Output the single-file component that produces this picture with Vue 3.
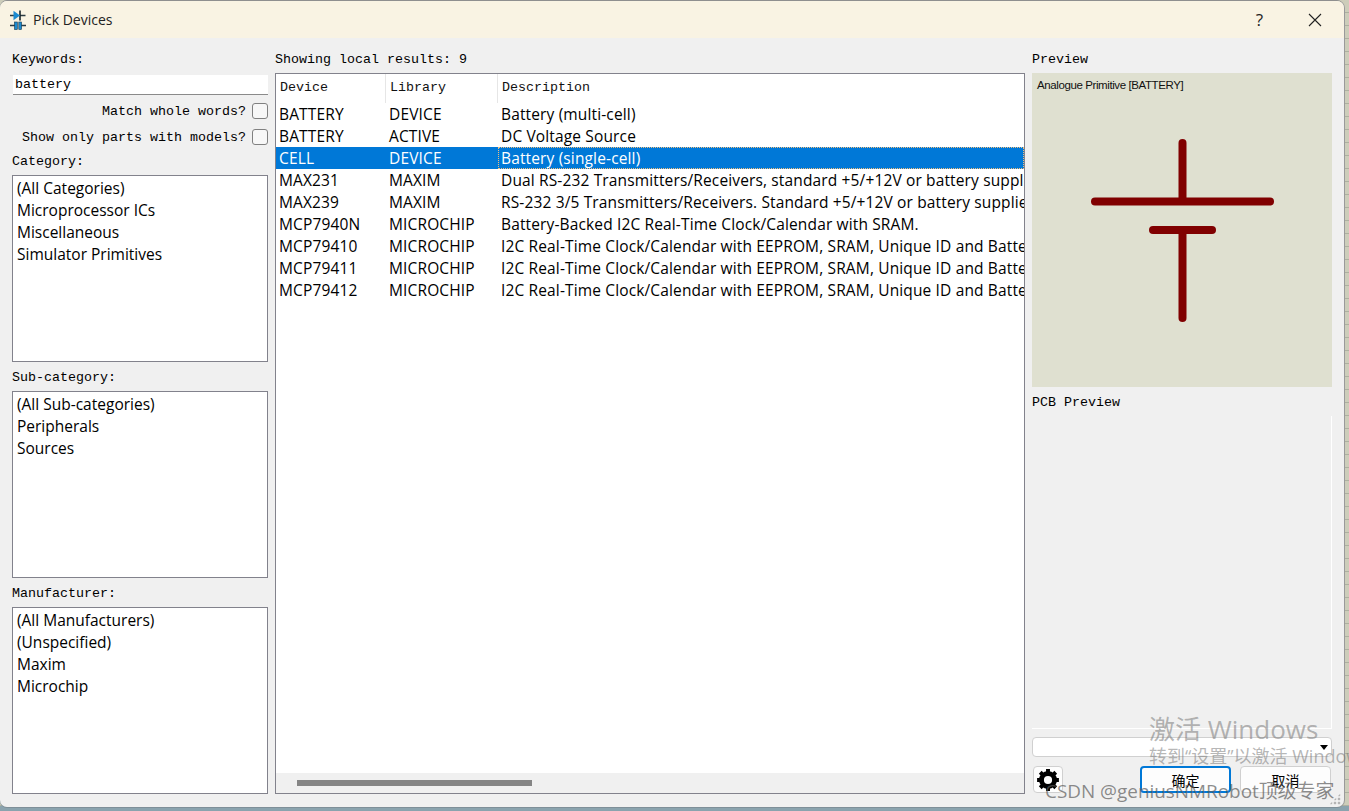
<script setup>
const categories = ['(All Categories)', 'Microprocessor ICs', 'Miscellaneous', 'Simulator Primitives']
const subCategories = ['(All Sub-categories)', 'Peripherals', 'Sources']
const manufacturers = ['(All Manufacturers)', '(Unspecified)', 'Maxim', 'Microchip']
const rows = [
  ['BATTERY', 'DEVICE', 'Battery (multi-cell)'],
  ['BATTERY', 'ACTIVE', 'DC Voltage Source'],
  ['CELL', 'DEVICE', 'Battery (single-cell)'],
  ['MAX231', 'MAXIM', 'Dual RS-232 Transmitters/Receivers, standard +5/+12V or battery supplies.'],
  ['MAX239', 'MAXIM', 'RS-232 3/5 Transmitters/Receivers. Standard +5/+12V or battery supplies.'],
  ['MCP7940N', 'MICROCHIP', 'Battery-Backed I2C Real-Time Clock/Calendar with SRAM.'],
  ['MCP79410', 'MICROCHIP', 'I2C Real-Time Clock/Calendar with EEPROM, SRAM, Unique ID and Battery Switchover'],
  ['MCP79411', 'MICROCHIP', 'I2C Real-Time Clock/Calendar with EEPROM, SRAM, Unique ID and Battery Switchover'],
  ['MCP79412', 'MICROCHIP', 'I2C Real-Time Clock/Calendar with EEPROM, SRAM, Unique ID and Battery Switchover'],
]
</script>

<template>
  <div class="desktop">
    <div class="window">
      <header class="titlebar">
        <svg class="app-icon" width="18" height="20" viewBox="0 0 18 20">
          <path d="M1 5.500h4.500M11 5.500h5.500" stroke="#2b3a42" stroke-width="1.300" fill="none" />
          <path d="M11 .5v10" stroke="#16222a" stroke-width="1.600" fill="none" />
          <path d="M4.500 .8 11 5.500 4.500 10.200z" fill="#1b8ad0" />
          <path d="M1 15.500h5M12 15.500h5" stroke="#2b3a42" stroke-width="1.300" fill="none" />
          <rect x="5.500" y="12" width="2.800" height="7.500" fill="#1b8ad0" stroke="#16384c" stroke-width=".6" />
          <rect x="9.800" y="12" width="2.800" height="7.500" fill="#1b8ad0" stroke="#16384c" stroke-width=".6" />
        </svg>
        <span class="title">Pick Devices</span>
        <span class="help">?</span>
        <svg class="close" width="14" height="14" viewBox="0 0 14 14">
          <path d="M1 1 13 13M13 1 1 13" stroke="#222" stroke-width="1.100" fill="none" />
        </svg>
      </header>

      <main class="content">
        <section class="left">
          <label class="mono kw-label">Keywords:</label>
          <div class="keyword mono">battery</div>
          <div class="check mono check-a">Match whole words?<i class="box"></i></div>
          <div class="check mono check-b">Show only parts with models?<i class="box"></i></div>
          <label class="mono cat-label">Category:</label>
          <ul class="list"><li v-for="c in categories" :key="c">{{ c }}</li></ul>
          <label class="mono sec-label">Sub-category:</label>
          <ul class="list"><li v-for="c in subCategories" :key="c">{{ c }}</li></ul>
          <label class="mono sec-label">Manufacturer:</label>
          <ul class="list"><li v-for="c in manufacturers" :key="c">{{ c }}</li></ul>
        </section>

        <section class="middle">
          <div class="mono head-label">Showing local results: 9</div>
          <div class="table">
            <div class="thead mono">
              <span class="c1">Device</span>
              <span class="c2">Library</span>
              <span class="c3">Description</span>
            </div>
            <div class="tbody">
              <div v-for="(r, i) in rows" :key="i" class="row" :class="{ selected: i === 2 }">
                <span class="c1">{{ r[0] }}</span>
                <span class="c2">{{ r[1] }}</span>
                <span class="c3">{{ r[2] }}</span>
              </div>
            </div>
            <div class="hscroll"><div class="thumb"></div></div>
          </div>
        </section>

        <section class="right">
          <div class="mono head-label">Preview</div>
          <div class="preview">
            <span class="preview-name">Analogue Primitive [BATTERY]</span>
            <svg class="symbol" width="300" height="314" viewBox="0 0 300 314">
              <g stroke="#800000" stroke-width="8" stroke-linecap="round" fill="none">
                <path d="M150.500 70V128" />
                <path d="M63 128.500H238" />
                <path d="M121 157H180" />
                <path d="M150.500 157V245" />
              </g>
            </svg>
          </div>
          <div class="mono pcb-label">PCB Preview</div>
          <div class="pcb"></div>
          <div class="combo"><i class="arrow"></i></div>
          <div class="actions">
            <button class="gear" aria-label="settings">
              <svg width="24" height="24" viewBox="0 0 22 22">
                <circle cx="11" cy="11" r="6" fill="none" stroke="#000" stroke-width="4.500" />
                <g stroke="#000" stroke-width="3.600">
                  <path d="M11 1v4M11 17v4M1 11h4M17 11h4M3.900 3.900l2.800 2.800M15.300 15.300l2.800 2.800M18.100 3.900l-2.800 2.800M6.700 15.300l-2.800 2.800" />
                </g>
              </svg>
            </button>
            <span class="spacer"></span>
            <button class="btn primary">确定</button>
            <button class="btn">取消</button>
          </div>
        </section>
      </main>
      <i class="grip"></i>
    </div>

    <div class="wm wm-a">激活 Windows</div>
    <div class="wm wm-b">转到“设置”以激活 Windows。</div>
    <div class="wm wm-c">CSDN @geniusNMRobot顶级专家</div>
  </div>
</template>

<style>
html, body { margin: 0; overflow: hidden; }
</style>

<style scoped>
.desktop {
  position: relative;
  width: 1349px;
  height: 811px;
  overflow: hidden;
  background:
    linear-gradient(#8aa3ae, #8aa3ae) 0 100% / 100% 5px no-repeat,
    repeating-linear-gradient(#cdcdba 0 12px, #aeb0a0 12px 13px);
  font-family: "Open Sans", "Noto Sans CJK SC", sans-serif;
}
.window {
  position: relative;
  width: 1344px;
  height: 806px;
  margin-top: 1px;
  background: #f0f0f0;
  border-radius: 7px;
  box-shadow: 1px 0 0 #9a9a9a, 0 1px 0 #7e8f98, 0 -1px 0 #8f8f8f;
  overflow: hidden;
}
.titlebar {
  height: 37px;
  display: flex;
  align-items: center;
  padding-left: 9px;
  background: #f9f3e3;
  color: #222;
}
.app-icon { margin-right: 6px; }
.title { font-size: 14px; flex: 1; }
.help { font-size: 17px; margin-right: 45px; }
.close { margin-right: 22px; }
.mono {
  font-family: "Liberation Mono", monospace;
  font-size: 13.330px;
  color: #000;
}
.content {
  display: flex;
  gap: 7px;
  padding: 13px 12px 0;
}
.left {
  width: 256px;
  display: flex;
  flex-direction: column;
}
label { display: block; }
.kw-label { height: 24px; line-height: 17px; }
.keyword {
  height: 19px;
  line-height: 20px;
  margin-left: 1px;
  padding-left: 2px;
  background: #fff;
  border-bottom: 1px solid #8a8a8a;
}
.check {
  display: flex;
  justify-content: flex-end;
  align-items: center;
  gap: 6px;
  height: 18px;
}
.check-a { margin-top: 7px; }
.check-b { margin-top: 8px; }
.box {
  width: 14px;
  height: 14px;
  border: 1px solid #808080;
  border-radius: 3px;
  background: #f7f7f7;
}
.cat-label { margin-top: 7px; height: 22px; line-height: 18px; }
.sec-label { height: 29px; line-height: 32px; }
.list {
  height: 184px;
  margin: 0;
  padding: 1px 0 0;
  list-style: none;
  background: #fff;
  border: 1px solid #82828c;
}
.list li {
  height: 22px;
  line-height: 22px;
  padding-left: 4px;
  font-size: 15.500px;
  color: #000;
}
.middle {
  width: 750px;
  display: flex;
  flex-direction: column;
}
.head-label { height: 22px; line-height: 17px; }
.table {
  height: 721px;
  box-sizing: border-box;
  display: flex;
  flex-direction: column;
  background: #fff;
  border: 1px solid #82828c;
}
.thead {
  display: flex;
  height: 29px;
  flex: none;
  line-height: 28px;
  color: #111;
}
.thead span { border-right: 1px solid #e6e6e6; }
.thead .c3 { border: 0; }
.c1 { width: 110px; padding-left: 4px; box-sizing: border-box; flex: none; }
.c2 { width: 112px; padding-left: 4px; box-sizing: border-box; flex: none; }
.c3 { flex: 1; min-width: 0; padding-left: 4px; white-space: nowrap; overflow: hidden; }
.tbody { flex: 1; min-height: 0; }
.row {
  display: flex;
  height: 22px;
  line-height: 23px;
  font-size: 15.500px;
  letter-spacing: .14px;
  color: #000;
}
.row .c1 { padding-left: 3px; }
.row .c2 { padding-left: 3px; }
.row .c3 { padding-left: 3px; }
.selected { background: #0078d7; color: #fff; }
.selected .c3 { outline: 1px dotted #f0c080; outline-offset: -1px; }
.hscroll {
  height: 20px;
  flex: none;
  padding: 7px 0 0 21px;
  box-sizing: border-box;
  background: #f0f0f0;
}
.thumb { width: 235px; height: 6px; background: #858585; }
.right {
  width: 300px;
  display: flex;
  flex-direction: column;
}
.preview {
  position: relative;
  height: 314px;
  background: #dfe0d0;
}
.preview-name {
  position: absolute;
  left: 5px;
  top: 4px;
  font: 11.500px/16px "Liberation Sans", sans-serif;
  letter-spacing: -.4px;
  color: #111;
}
.symbol { display: block; }
.pcb-label { height: 29px; line-height: 32px; }
.pcb {
  height: 312px;
  border-right: 1px solid #fff;
  border-bottom: 1px solid #fff;
}
.combo {
  position: relative;
  height: 18px;
  margin-top: 8px;
  background: #fff;
  border: 1px solid #d0d0d0;
  border-radius: 4px;
}
.arrow {
  position: absolute;
  right: 3px;
  top: 7px;
  border: 4px solid transparent;
  border-top: 5px solid #000;
  border-bottom: 0;
}
.actions {
  display: flex;
  gap: 9px;
  margin-top: 9px;
  padding-left: 1px;
  height: 27px;
}
.spacer { flex: 1; }
button {
  padding: 0;
  background: #fdfdfd;
  border: 1px solid #d0d0d0;
  border-radius: 4px;
  box-sizing: border-box;
}
.gear {
  width: 30px;
  display: flex;
  align-items: center;
  justify-content: center;
}
.btn {
  width: 91px;
  font: 14px "Noto Sans CJK SC", sans-serif;
  color: #000;
  margin-right: 1px;
}
.primary { border: 2px solid #0078d7; margin-right: 0; }
.grip {
  position: absolute;
  right: 3px;
  bottom: 2px;
  width: 12px;
  height: 12px;
  background: radial-gradient(circle, #b4b4b4 1.500px, transparent 1.600px) 0 0 / 4px 4px;
  clip-path: polygon(100% 0, 100% 100%, 0 100%);
}
.wm {
  position: absolute;
  white-space: nowrap;
  pointer-events: none;
  font-family: "Open Sans", "Noto Sans CJK SC", sans-serif;
}
.wm-a { left: 1149px; top: 712px; font-size: 26px; line-height: 34px; color: rgba(120,120,120,.55); }
.wm-b { left: 1149px; top: 744px; font-size: 18px; line-height: 24px; color: rgba(120,120,120,.55); }
.wm-c { left: 1045px; top: 779px; font-size: 18.900px; line-height: 24px; color: rgba(90,90,90,.7); }
</style>
